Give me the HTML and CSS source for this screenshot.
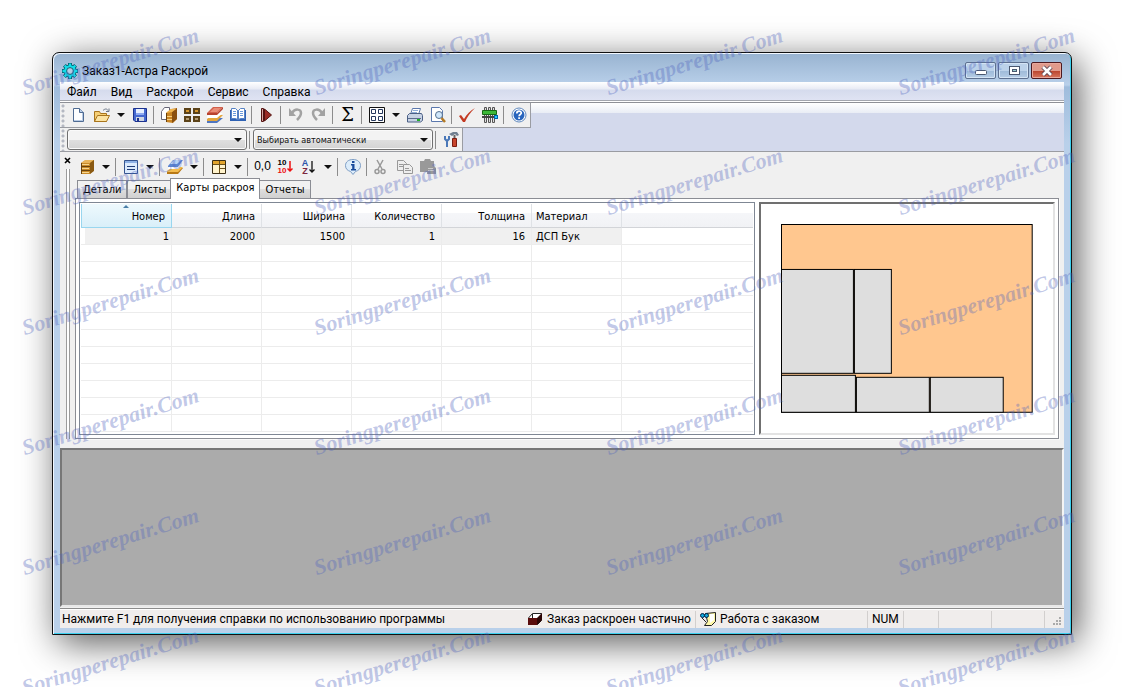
FILE: index.html
```
<!DOCTYPE html>
<html lang="ru">
<head>
<meta charset="utf-8">
<title>Заказ1-Астра Раскрой</title>
<link rel="stylesheet" href="styles.css">
</head>
<body>
<svg class="defs" aria-hidden="true">
  <symbol id="cabinet" viewBox="0 0 16 16"><path fill="#c98a28" d="M2 4l5-3h8v10l-4 4H2z"/><path fill="#e9b55b" d="M2 4l4-3h9l-4 3z"/><path fill="#8a5a13" d="M11 4l4-3v11l-4 3z"/><path stroke="#6b430c" fill="none" d="M2 7.500h9M2 11.500h9M2.500 4v11"/><path stroke="#f6d690" d="M3 5.500h7M3 9.500h7M3 13.500h7"/></symbol>
  <symbol id="stack" viewBox="0 0 16 16"><path fill="#4f76c0" d="M0 14l5-3h11l-6 5H0z"/><path fill="#e3a63c" d="M0 12l5-4h11l-6 6H0z"/><path fill="#fff" d="M0 9l5-3h11l-6 5H0z"/><path fill="#d2604c" d="M0 6l6-6h10l-6 6H0z"/><path fill="#b8432f" d="M0 6h10l6-6v2l-6 6H0z"/><path fill="#e98d77" d="M3 5l4-4h7l-4 4z"/></symbol>
  <symbol id="sheets" viewBox="0 0 16 16"><path fill="#b87816" d="M0 13l5-4h11l-5 6H0z"/><path fill="#f3bb4e" d="M0 12l5-4h11l-5 5H0z"/><path fill="#fff" d="M1 9l5-4h10l-5 5H1z"/><path fill="#5c86d2" d="M1 7l5-6h10l-5 7H1z"/><path fill="#b8d3f6" d="M3 5l4-4h7l-4 4z"/></symbol>
</svg>
<main class="window">
  <header class="titlebar">
    <svg class="gear" viewBox="0 0 16 16"><path stroke="#045a68" stroke-width="4" d="M8 0v16M0 8h16M2.400 2.400l11.200 11.200M13.600 2.400L2.400 13.600"/><circle cx="8" cy="8" r="6.500" fill="#045a68"/><path stroke="#12dce8" stroke-width="2.400" d="M8 .5v15M.5 8h15M2.700 2.700l10.600 10.600M13.300 2.700L2.700 13.300"/><circle cx="8" cy="8" r="5.800" fill="#12dce8"/><circle cx="8" cy="8" r="3.400" fill="#b4cce6" stroke="#045a68" stroke-width=".9"/></svg>
    <h1>Заказ1-Астра Раскрой</h1>
    <div class="winbuttons">
      <button aria-label="Свернуть"><svg viewBox="0 0 14 12"><rect x="1.500" y="5.500" width="11" height="4" rx="1" fill="#fff" stroke="#4a5870"/></svg></button>
      <button aria-label="Развернуть"><svg viewBox="0 0 14 12"><rect x="2.500" y="1.500" width="10" height="8" fill="#fff" stroke="#4a5870"/><rect x="5.500" y="4.500" width="4" height="2" fill="#9cc" stroke="#4a5870"/></svg></button>
      <button class="close" aria-label="Закрыть"><svg viewBox="0 0 14 12"><path d="M3 2l8 8M11 2l-8 8" stroke="#5b4450" stroke-width="4.500"/><path d="M3 2l8 8M11 2l-8 8" stroke="#fff" stroke-width="2.600"/></svg></button>
    </div>
  </header>
  <div class="client">
    <nav class="menu"><button>Файл</button><button>Вид</button><button>Раскрой</button><button>Сервис</button><button>Справка</button></nav>
    <div class="rebar">
      <div class="band">
        <i class="grip"></i>
        <button class="tool" aria-label="Новый"><svg viewBox="0 0 16 16"><path fill="#fdfeff" stroke="#4f6b92" d="M2.500 1.500h6l4 4v9h-10z"/><path fill="#bcd0ea" stroke="#4f6b92" d="M8.500 1.500v4h4"/><path stroke="#b9cbe4" d="M11.500 6v8M3 13.500h9"/></svg></button>
        <button class="tool" aria-label="Открыть"><svg viewBox="0 0 16 16"><path fill="#f6cf74" stroke="#a8741c" d="M.5 14.500v-10h5l1 2h6v8z"/><path fill="#fbe3a2" stroke="#a8741c" d="M.5 14.500l3-6h12l-3 6z"/><path fill="none" stroke="#6b7688" d="M9 3.500c2-2 4-2 5 0m1-2v3h-3"/></svg></button>
        <button class="drop" aria-label="Открыть последние"></button>
        <button class="tool" aria-label="Сохранить"><svg viewBox="0 0 16 16"><path fill="#4468d0" stroke="#1c328e" d="M1.500 1.500h13v13H3l-1.500-1.500z"/><path fill="#e6efff" d="M4 2h8v6H4z"/><path fill="#8faaf0" d="M4 6h8v2H4z"/><path fill="#cfd6e2" d="M4 10h8v4H4z"/><path fill="#1c328e" d="M5 11h2v3H5z"/></svg></button>
        <i class="sep"></i>
        <button class="tool" aria-label="Изделие"><svg viewBox="0 0 16 16"><path fill="#fff" stroke="#667" d="M.5 4.500l3-4h5v12h-8z"/><path fill="#c98422" d="M5 6l5-4 6-1v11l-4 4-7-1z"/><path fill="#8a5010" d="M11 5l5-4v11l-5 4z"/><path fill="#efb550" d="M5 6l5-4h5l-4 3z"/><path stroke="#f8d080" d="M6 9.500h5M6 12.500h5"/><path stroke="#6b430c" d="M5.500 6v9"/></svg></button>
        <button class="tool" aria-label="Листы"><svg viewBox="0 0 16 16"><path fill="#d6962a" stroke="#5c4318" stroke-width="2" d="M1 2h5v4H1zM10 2h5v4h-5z"/><path fill="#b39b72" stroke="#5c4318" stroke-width="2" d="M1 10h5v4H1zM10 10h5v4h-5z"/></svg></button>
        <button class="tool" aria-label="Материалы"><svg><use href="#stack"/></svg></button>
        <button class="tool" aria-label="Справочник"><svg viewBox="0 0 16 16"><path fill="#2f62b4" d="M0 3h16v11H0z"/><path fill="#fff" stroke="#5782c4" d="M1.500 1.500h4l2 2v9l-2-1h-4zM14.500 1.500h-4l-2 2v9l2-1h4z"/><path stroke="#6c9adb" d="M3 4.500h3M3 6.500h3M3 8.500h3M10 4.500h3M10 6.500h3M10 8.500h3"/></svg></button>
        <i class="sep"></i>
        <button class="tool" aria-label="Раскроить"><svg viewBox="0 0 16 16"><path fill="#9a2a24" stroke="#541311" d="M5.500 2l7 6-7 6z"/><path fill="#d8a8a4" stroke="#541311" d="M2.500 1.500h2v13h-2z"/></svg></button>
        <i class="sep"></i>
        <button class="tool" aria-label="Отменить"><svg viewBox="0 0 16 16"><path fill="none" stroke="#a2a2a2" stroke-width="2.500" d="M4 6c3-5 9-4 9 0 0 3-2 5-4 7"/><path fill="#a2a2a2" d="M1 1v8h7z"/></svg></button>
        <button class="tool" aria-label="Повторить"><svg viewBox="0 0 16 16"><path fill="none" stroke="#a2a2a2" stroke-width="2.500" d="M11 6c-3-5-9-4-9 0 0 3 2 5 4 7"/><path fill="#a2a2a2" d="M14 1v8H7z"/></svg></button>
        <i class="sep"></i>
        <button class="tool sigma" aria-label="Сумма">Σ</button>
        <i class="sep"></i>
        <button class="tool" aria-label="Вид карт"><svg viewBox="0 0 16 16"><path fill="#fff" stroke="#111" d="M.5.5h15v15H.5z"/><path fill="#fff" stroke="#24365c" d="M2.500 2.500h4v4h-4zM9.500 2.500h4v4h-4zM2.500 9.500h4v4h-4zM9.500 9.500h4v4h-4z"/></svg></button>
        <button class="drop" aria-label="Выбор вида"></button>
        <button class="tool" aria-label="Печать"><svg viewBox="0 0 16 16"><path fill="#fff" stroke="#5b78ad" d="M5.500 1.500h8l-2 6h-8z"/><path stroke="#8fadd8" d="M6 3.500h5M5 5.500h5"/><path fill="#c7d2e4" stroke="#4b5f84" d="M.5 8.500l2-2h12l1 2v5l-2 1.500H.5z"/><path fill="#5a6c8c" d="M1 11h13v1H1z"/><path fill="#1fae28" d="M10 12h3v2h-3z"/></svg></button>
        <button class="tool" aria-label="Просмотр"><svg viewBox="0 0 16 16"><path fill="#fff" stroke="#5b78ad" d="M1.500.5h8l3 3v11h-11z"/><circle cx="9" cy="8" r="3.500" fill="#cfe6fa" stroke="#55708f"/><path stroke="#b57a24" stroke-width="2.500" d="M11.500 11l3.500 4"/></svg></button>
        <i class="sep"></i>
        <button class="tool" aria-label="Проверить"><svg viewBox="0 0 16 16"><path fill="#c33a22" d="M0 9l2-1 3 4C8 7 11 4 16 1 11 6 8 10 6 15H4z"/></svg></button>
        <button class="tool" aria-label="Станок"><svg viewBox="0 0 16 16"><path fill="#ddd" stroke="#555" d="M2.500.5h2v15h-2zM6.500.5h2v15h-2zM10.500.5h2v15h-2z"/><path fill="#3cb838" stroke="#176815" d="M.5 3.500h14v4H.5z"/><path fill="#444" d="M0 9h13v2H0z"/><path fill="#06a" d="M12 8h4v4h-4z"/><path fill="#2cf" d="M13 9h2v2h-2z"/></svg></button>
        <i class="sep"></i>
        <button class="tool" aria-label="Справка"><svg viewBox="0 0 16 16"><circle cx="8" cy="8" r="7" fill="#fff" stroke="#6189bd"/><circle cx="8" cy="8" r="5.500" fill="#2865bd"/><path fill="none" stroke="#fff" stroke-width="1.700" d="M5.800 6.500c0-3 4.500-3 4.500-.4 0 1.500-2.200 1.300-2.200 3.100M8.100 10.300v1.700"/></svg></button>
      </div>
      <div class="band">
        <i class="grip"></i>
        <label class="combo"><select aria-label="Материал"><option></option></select></label>
        <i class="sep"></i>
        <label class="combo"><select aria-label="Режим выбора"><option>Выбирать автоматически</option></select></label>
        <i class="sep"></i>
        <button class="tool" aria-label="Настройки"><svg viewBox="0 0 16 16"><path fill="none" stroke="#4a78b8" stroke-width="2" d="M2 4v3l2 2 2-2V4M4 9v6"/><path fill="#708090" d="M6 2l4-2h4l2 3-2 1-2-2-3 2z"/><path fill="#c8452c" stroke="#7a1c10" d="M9.500 6.500h4v8h-4z"/><path stroke="#666" stroke-width="2" d="M11.500 3v3"/></svg></button>
      </div>
    </div>
    <section class="dock">
      <div class="dockside"><button class="dockclose" aria-label="Закрыть панель"><svg viewBox="0 0 7 7"><path stroke="#000" stroke-width="1.600" d="M1 1l5 5M6 1L1 6"/></svg></button><i class="dockgrip"></i></div>
      <div class="dockbody">
        <div class="tools">
          <button class="tool" aria-label="Изделия"><svg><use href="#cabinet"/></svg></button><button class="drop" aria-label="Меню изделий"></button>
          <i class="sep"></i>
          <button class="tool" aria-label="Список"><svg viewBox="0 0 16 16"><path fill="#dcebfd" stroke="#35548f" d="M1.500 1.500h13v13h-13z"/><path fill="#8fb2e6" d="M2 2h12v2H2z"/><path stroke="#223e78" d="M4 7.500h8M4 10.500h8"/></svg></button><button class="drop" aria-label="Меню списка"></button>
          <i class="sep"></i>
          <button class="tool" aria-label="Листы материала"><svg><use href="#sheets"/></svg></button><button class="drop" aria-label="Меню листов"></button>
          <i class="sep"></i>
          <button class="tool" aria-label="Карта"><svg viewBox="0 0 16 16"><path fill="#fff3cc" stroke="#3c3016" d="M1.500 1.500h13v13h-13z"/><path fill="#e2a42c" d="M2 2h12v3H2z"/><path fill="none" stroke="#6a4f18" d="M2 5.500h12M8.500 2v12M8 9.500h6"/></svg></button><button class="drop" aria-label="Меню карт"></button>
          <i class="sep"></i>
          <button class="tool zero">0,0</button>
          <button class="tool" aria-label="Округление"><span class="pair"><span class="digits"><b>10</b><b class="red">10</b></span><svg viewBox="0 0 6 12"><path stroke="#e11" stroke-width="1.500" fill="none" d="M3 0v10M.5 7.500L3 10l2.500-2.500"/></svg></span></button>
          <button class="tool" aria-label="Сортировка"><span class="pair"><span class="digits letters"><b class="blue">A</b><b class="maroon">Z</b></span><svg viewBox="0 0 6 12"><path stroke="#111" stroke-width="1.300" fill="none" d="M3 0v11M.5 8.500L3 11l2.500-2.500"/></svg></span></button><button class="drop" aria-label="Порядок сортировки"></button>
          <i class="sep"></i>
          <button class="tool" aria-label="Сведения"><svg viewBox="0 0 16 16"><path fill="#dcecfa" stroke="#7d9dc4" d="M8 .5c4.500 0 7.500 2.500 7.500 6s-2 5-5 6L8 15.500l-2.500-3c-3-1-5-2.500-5-6s3-6 7.500-6z"/><path fill="#174a9c" d="M7 2h2.500v2H7zM6 5h3.500v5H11v1.500H6V10h1.200V6.500H6z"/></svg></button>
          <i class="sep"></i>
          <button class="tool" aria-label="Вырезать"><svg viewBox="0 0 16 16"><path stroke="#999" stroke-width="1.500" fill="none" d="M3 1l5 9M9 1l-5 9"/><circle cx="3" cy="12.500" r="2" fill="none" stroke="#999" stroke-width="1.500"/><circle cx="9" cy="12.500" r="2" fill="none" stroke="#999" stroke-width="1.500"/></svg></button>
          <button class="tool" aria-label="Копировать"><svg viewBox="0 0 16 16"><path fill="#eee" stroke="#999" d="M.5 1.500h6l3 3v7h-9z"/><path fill="#eee" stroke="#999" d="M6.500 5.500h6l3 3v6h-9z"/><path stroke="#999" d="M2 5.500h4M2 7.500h4M8 9.500h4M8 11.500h6"/></svg></button>
          <button class="tool" aria-label="Вставить"><svg viewBox="0 0 16 16"><path fill="#999" d="M0 2h4l1-2h5l1 2h3v5l2 2v6H7v-2H0z"/><path stroke="#ccc" d="M8 9.500h5M8 11.500h6"/></svg></button>
        </div>
        <div class="tabs" role="tablist"><button role="tab">Детали</button><button role="tab">Листы</button><button role="tab" class="active" aria-selected="true">Карты раскроя</button><button role="tab">Отчеты</button></div>
        <div class="page">
          <div class="list">
            <table>
              <colgroup><col class="first"><col class="c"><col class="c"><col class="c"><col class="c"><col class="c"><col></colgroup>
              <thead><tr><th class="sorted">Номер</th><th>Длина</th><th>Ширина</th><th>Количество</th><th>Толщина</th><th class="left">Материал</th><th></th></tr></thead>
              <tbody>
                <tr class="filled"><td>1</td><td>2000</td><td>1500</td><td>1</td><td>16</td><td class="left">ДСП Бук</td><td></td></tr>
                <tr><td></td><td></td><td></td><td></td><td></td><td></td><td></td></tr>
                <tr><td></td><td></td><td></td><td></td><td></td><td></td><td></td></tr>
                <tr><td></td><td></td><td></td><td></td><td></td><td></td><td></td></tr>
                <tr><td></td><td></td><td></td><td></td><td></td><td></td><td></td></tr>
                <tr><td></td><td></td><td></td><td></td><td></td><td></td><td></td></tr>
                <tr><td></td><td></td><td></td><td></td><td></td><td></td><td></td></tr>
                <tr><td></td><td></td><td></td><td></td><td></td><td></td><td></td></tr>
                <tr><td></td><td></td><td></td><td></td><td></td><td></td><td></td></tr>
                <tr><td></td><td></td><td></td><td></td><td></td><td></td><td></td></tr>
                <tr><td></td><td></td><td></td><td></td><td></td><td></td><td></td></tr>
                <tr><td></td><td></td><td></td><td></td><td></td><td></td><td></td></tr>
              </tbody>
            </table>
          </div>
          <div class="preview">
            <svg viewBox="0 0 252 189" role="img" aria-label="Карта раскроя">
              <g stroke="#000" fill="#dedede">
                <rect x=".5" y=".5" width="251" height="188" fill="#ffc78f"/>
                <rect x=".5" y="45.500" width="72" height="104"/><rect x="73.500" y="45.500" width="37" height="104"/>
                <rect x=".5" y="151.500" width="74" height="37"/><rect x="75.500" y="153.500" width="73" height="35"/><rect x="149.500" y="153.500" width="73" height="35"/>
              </g>
            </svg>
          </div>
        </div>
      </div>
    </section>
    <section class="workspace"></section>
    <footer class="status">
      <span class="hint">Нажмите F1 для получения справки по использованию программы</span>
      <span class="state"><svg viewBox="0 0 16 16"><path fill="#fff" stroke="#222" d="M1.500 7l4-4.500h9v7l-4 4h-9z"/><path fill="#5a0d0d" d="M1 7h9v7H1z"/><path fill="#2c0505" d="M10 7l5-5v7l-5 5z"/><path stroke="#222" d="M5.500 3v4"/></svg>Заказ раскроен частично</span>
      <span class="mode"><svg viewBox="0 0 16 16"><path fill="#fdf7a8" stroke="#222" d="M5.500 2.500l10-1v9l-4 4h-7l3-4z"/><path fill="#fff" d="M10 3h4v6l-4 3z"/><circle cx="2.500" cy="4.500" r="2" fill="#1ad" stroke="#024"/><circle cx="6.500" cy="4.500" r="2" fill="#1ad" stroke="#024"/><path stroke="#222" d="M2 7l4 4"/></svg>Работа с заказом</span>
      <span class="num">NUM</span><span class="cell s"></span><span class="cell m"></span><span class="cell m"></span>
      <span class="sizer"><svg viewBox="0 0 9 9"><path fill="#aaa" d="M6 0h2v2H6zM3 3h2v2H3zM6 3h2v2H6zM0 6h2v2H0zM3 6h2v2H3zM6 6h2v2H6z"/></svg></span>
    </footer>
  </div>
</main>
<div class="marks" aria-hidden="true">
  <span>Soringperepair.Com</span><span>Soringperepair.Com</span><span>Soringperepair.Com</span><span>Soringperepair.Com</span>
  <span>Soringperepair.Com</span><span>Soringperepair.Com</span><span>Soringperepair.Com</span><span>Soringperepair.Com</span>
  <span>Soringperepair.Com</span><span>Soringperepair.Com</span><span>Soringperepair.Com</span><span>Soringperepair.Com</span>
  <span>Soringperepair.Com</span><span>Soringperepair.Com</span><span>Soringperepair.Com</span><span>Soringperepair.Com</span>
  <span>Soringperepair.Com</span><span>Soringperepair.Com</span><span>Soringperepair.Com</span><span>Soringperepair.Com</span>
  <span>Soringperepair.Com</span><span>Soringperepair.Com</span><span>Soringperepair.Com</span><span>Soringperepair.Com</span>
</div>
</body>
</html>
```
FILE: styles.css
```
* { box-sizing: border-box; }
body {
  margin: 0; padding: 52px; min-height: 100vh; display: flex; position: relative; overflow: hidden;
  background: #fff; color: #000; font: 12px/16px Roboto, "Noto Sans", sans-serif;
}
button { font: inherit; color: inherit; border: 0; padding: 0; background: none; }
svg { display: block; }
.defs { position: absolute; width: 0; height: 0; }

.window {
  flex: 1; min-width: 0; display: flex; flex-direction: column; padding: 0 6px 6px;
  border: 1px solid #111; border-radius: 7px 7px 0 0;
  background: linear-gradient(#98b3d0, #b9d0ea 32px, #9fbcdc 34px, #b9d0ea 90px);
  box-shadow: inset 1px 1px #f2f8ff, inset -1px -1px #3bd0ee, 6px 8px 36px rgba(0, 0, 0, .65);
}
.titlebar { display: flex; align-items: center; height: 29px; gap: 4px; padding: 6px 0 0 3px; }
.gear { width: 16px; height: 16px; }
.titlebar h1 { flex: 1; margin: 0; font-size: 12px; font-weight: 400; }
.winbuttons { display: flex; gap: 2px; align-self: flex-start; padding: 3px 3px 0 0; }
.winbuttons button {
  width: 31px; height: 17px; display: grid; place-items: center;
  border: 1px solid #5d708f; border-radius: 2px; box-shadow: inset 0 0 0 1px #d4e4f5;
  background: linear-gradient(#bcd2ea 50%, #9db9d8 50%, #b5cde6);
}
.winbuttons .close { border-color: #4d1a20; box-shadow: inset 0 0 0 1px #e8a79b; background: linear-gradient(#e09a8b 50%, #b8412b 50%, #d8775f); }
.winbuttons svg { width: 14px; height: 12px; }

.client { flex: 1; display: flex; flex-direction: column; margin: 0 1px; background: #f0f0f0; }
.menu {
  display: flex; gap: 14px; height: 21px; padding: 1px 7px 0;
  background: linear-gradient(#fff, #e8ebf5 7px, #d5dbed 8px, #dfe3f3 18px, #a3a6ae 18px, #a3a6ae 19px, #fff 19px, #fff 20px, #8e9096 20px);
}
.menu button { height: 18px; }

.rebar { background: linear-gradient(#fff, #e9edf5 10px, #d3d9ec 10px); border-bottom: 1px solid #9a9ca2; }
.band { display: flex; align-items: center; width: max-content; height: 24px; background: #f0f0f0; border-right: 1px solid #9a9ca2; box-shadow: 0 1px #9a9ca2; }
.band + .band { height: 23px; margin-top: 1px; }
.grip { align-self: stretch; width: 7px; background: radial-gradient(circle at 3px 3px, #b4b8c2 1px, transparent 2px) 0 0 / 7px 5px; }
.tool { width: 23px; height: 22px; display: grid; place-items: center; }
.tool svg { width: 16px; height: 16px; }
.drop { width: 15px; height: 22px; display: grid; place-items: center; }
.drop::before, .combo::after { content: ""; border: 4px solid transparent; border-top-color: #111; border-bottom: 0; }
.sep { width: 1px; height: 18px; margin: 0 3px 0 2px; background: #8c8c8c; }
.sigma { font: 400 18px/20px "DejaVu Serif", serif; }
.zero { font: 12px/16px "Liberation Sans", sans-serif; padding-bottom: 3px; }
.combo { position: relative; display: flex; width: 180px; height: 21px; }
.combo::after { position: absolute; right: 5px; top: 9px; }
.combo select {
  flex: 1; min-width: 0; appearance: none; padding: 0 18px 0 3px; border: 1px solid #707070; border-radius: 3px; color: #111;
  background: linear-gradient(#f3f3f3 50%, #e0e0e0 50%, #d3d3d3); box-shadow: inset 0 0 0 1px #fafafa;
  font: 9px/12px "DejaVu Sans Condensed", "DejaVu Sans", sans-serif;
}

.dock { display: flex; padding: 4px 5px 9px 0; }
.dockside { width: 15px; display: flex; flex-direction: column; align-items: center; gap: 5px; }
.dockclose { width: 7px; height: 7px; margin-top: 1px; }
.dockgrip { flex: 1; width: 4px; border: solid #9c9c9c; border-width: 0 1px; background: #fff; }
.dockbody { flex: 1; min-width: 0; }
.tools { display: flex; align-items: center; height: 22px; }
.pair { display: flex; align-items: center; gap: 1px; }
.tool .pair svg { width: 6px; height: 14px; }
.digits { display: grid; font: 700 8px/8px "Liberation Sans", sans-serif; justify-items: center; }
.letters { font-size: 9px; }
.red { color: #e11; } .blue { color: #2b55a8; } .maroon { color: #7c2740; }

.tabs { display: flex; align-items: flex-end; height: 20px; padding-left: 2px; font: 11px/16px "DejaVu Sans Condensed", "DejaVu Sans", sans-serif; }
.tabs button { height: 18px; padding: 0 5px; border: 1px solid #8b8d94; border-bottom: 0; background: linear-gradient(#f1f1f1 50%, #dedede 50%, #d0d0d0); white-space: nowrap; }
.tabs .active { height: 21px; padding: 0 5px 3px; margin: 0 -1px -1px -2px; background: #fff; position: relative; }
.page { display: grid; grid-template-columns: 677fr 296fr; gap: 4px; padding: 3px; border: 1px solid #8b8d94; background: #fff; box-shadow: 1px 1px #fafafa; }
.list { border: 1px solid #7f8794; padding: 1px 1px 2px; }
table { width: 100%; table-layout: fixed; border-collapse: separate; border-spacing: 0; font: 11px/16px "DejaVu Sans Condensed", "DejaVu Sans", sans-serif; }
.first { width: 91px; }
.c { width: 90px; }
th { height: 24px; padding: 2px 6px 0 0; font-weight: 400; text-align: right; border-right: 1px solid #dfe2e6; border-bottom: 1px solid #d2d4d8; background: linear-gradient(#fff 9px, #f5f6f9 9px, #f1f2f5); }
th.left, td.left { text-align: left; padding-left: 4px; }
th.sorted { position: relative; border: 1px solid #99d6ef; border-top: 0; background: linear-gradient(#eef9fd, #d9eff9); }
th.sorted::before { content: ""; position: absolute; left: 41px; top: 1px; border: 3px solid transparent; border-bottom-color: #4a7fa8; border-top: 0; }
td { height: 17px; padding: 0 6px 0 0; line-height: 14px; text-align: right; border-right: 1px solid #ececec; border-bottom: 1px solid #ececec; }
.filled td { padding-top: 2px; background: #f0f0f0; }
.filled td:first-child { background: linear-gradient(90deg, #fff 4px, #f0f0f0 4px); padding-right: 2px; }
.filled td:last-child { background: none; }
th:last-child, td:last-child { border-right: 0; }
.preview { padding: 20px; border: 2px solid; border-color: #707070 #e3e3e3 #e3e3e3 #707070; }
.preview svg { width: 100%; }

.workspace { flex: 1; min-height: 60px; background: #ababab; border: 2px solid; border-color: #777 #f4f4f4 #e8e8e8 #777; }
.status { display: flex; height: 20px; background: #f0edec; border-top: 1px solid #8c8c8c; line-height: 20px; box-shadow: inset 0 1px #fff; margin-top: 1px; white-space: nowrap; }
.status span + span { border-left: 1px solid #d2cfce; margin-top: 2px; line-height: 17px; }
.status svg { width: 16px; height: 16px; }
.hint { flex: 1; min-width: 0; overflow: hidden; padding-left: 2px; }
.status .state { width: 168px; display: flex; gap: 4px; border-left: 0; }
.mode { width: 172px; display: flex; gap: 4px; padding-left: 4px; }
.num { width: 36px; padding-left: 4px; }
.s { width: 35px; } .m { width: 53px; }
.sizer { width: 20px; display: flex; justify-content: flex-end; align-items: flex-end; padding: 2px; }
.status .sizer svg { width: 9px; height: 9px; }

.marks { position: absolute; inset: 0; overflow: hidden; display: grid; grid-template-columns: repeat(4, 292px); grid-auto-rows: 120px; pointer-events: none; }
.marks span { align-self: start; padding: 76px 0 0 26px; width: max-content; font: italic 700 22px/24px "Liberation Serif", serif; color: rgba(80, 100, 190, .36); transform: rotate(-17deg); transform-origin: 26px 100px; }
```
